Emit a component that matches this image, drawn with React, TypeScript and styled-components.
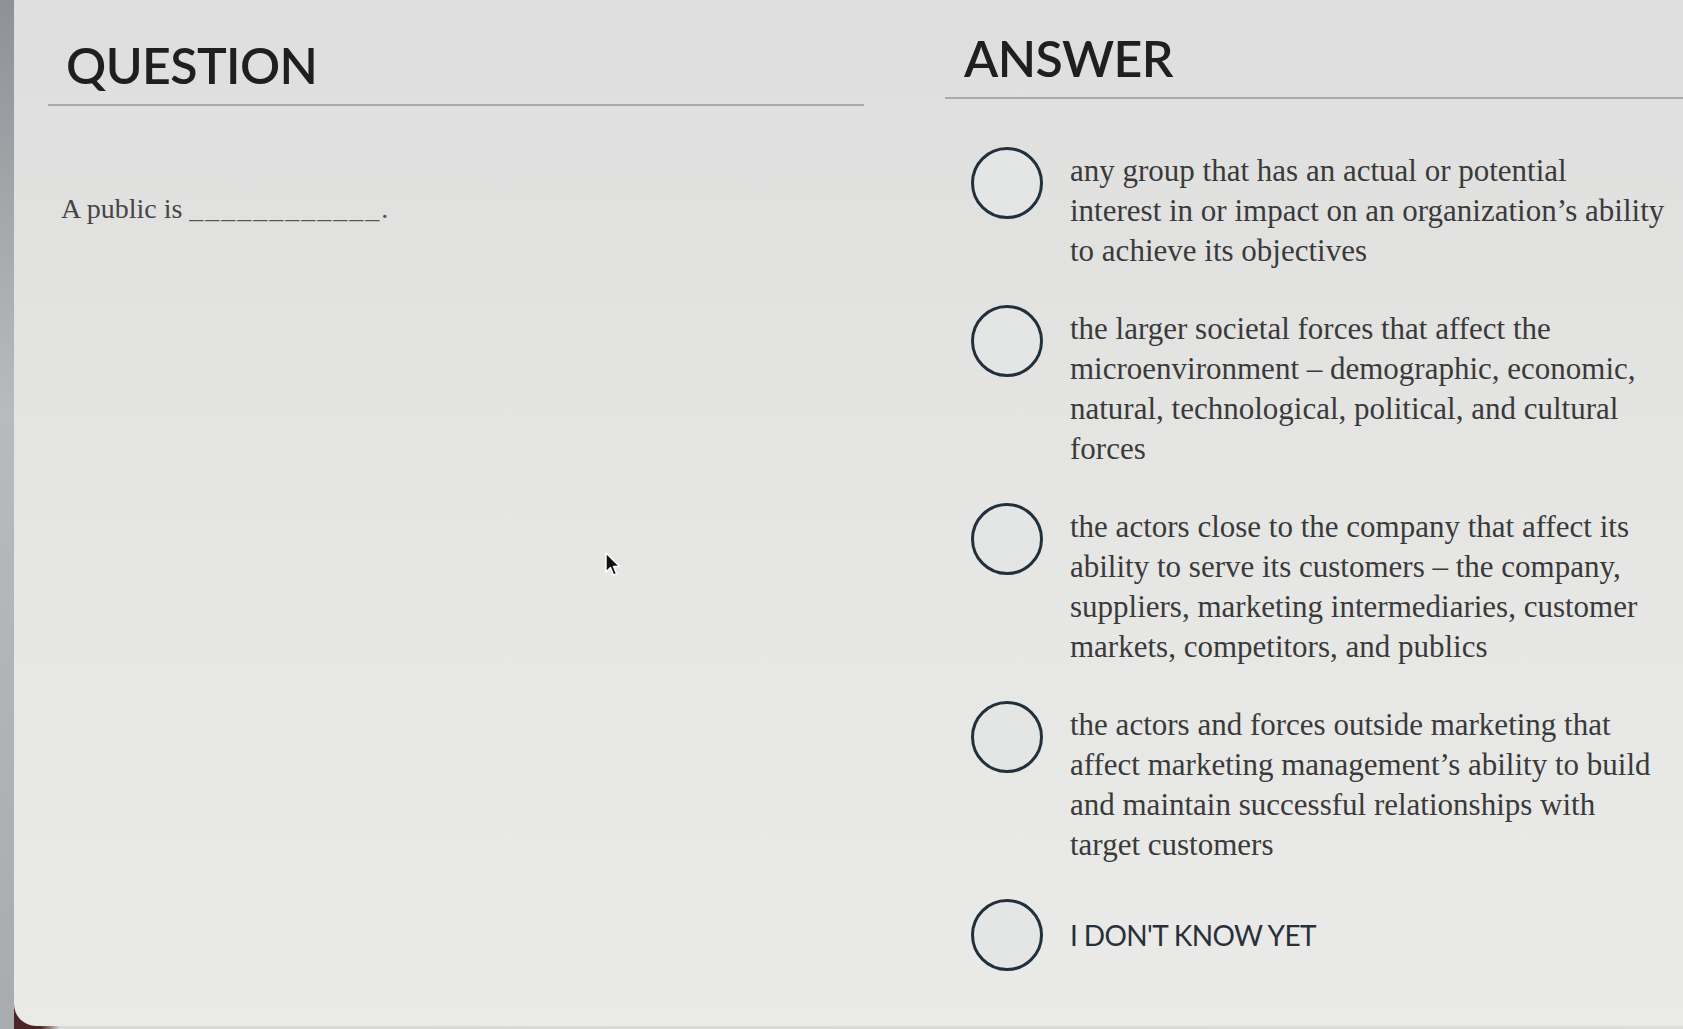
import styled, { createGlobalStyle } from "styled-components";

const GlobalStyle = createGlobalStyle`
  html, body {
    margin: 0;
    padding: 0;
    background: #3a2426;
  }
  * {
    box-sizing: border-box;
  }
`;

const Page = styled.div`
  display: flex;
  width: 1683px;
  height: 1029px;
  overflow: hidden;
  background: linear-gradient(to right, #4a2527 0, #4a2527 40px, #d9d9d7 60px, #dcdcda);
`;

const Bezel = styled.div`
  width: 14px;
  height: 1029px;
  background: linear-gradient(to bottom, #8e9296, #b8bbbe 40%, #a9acaf);
`;

const Screen = styled.main`
  position: relative;
  flex: 1;
  height: 1026px;
  display: grid;
  grid-template-columns: 816px 1fr;
  align-items: start;
  column-gap: 81px;
  padding: 28px 0 0 34px;
  border-bottom-left-radius: 22px;
  background: linear-gradient(to bottom, #dedede, #e6e6e4 55%, #eaeae8);
  overflow: hidden;
`;

const Column = styled.section`
  display: flex;
  flex-direction: column;
`;

const SectionHeader = styled.h2<{ $top: number; $indent: number }>`
  margin: 0;
  padding: ${({ $top }) => $top}px 0 9px ${({ $indent }) => $indent}px;
  border-bottom: 2px solid #a9a9a8;
  font-family: Lato, "Open Sans", sans-serif;
  font-weight: 600;
  font-size: 50px;
  line-height: 60px;
  color: #1f1f1f;
  letter-spacing: -0.6px;
`;

const QuestionText = styled.p`
  margin: 83px 0 0 13px;
  font-family: "Liberation Serif", "DejaVu Serif", serif;
  font-size: 28px;
  line-height: 40px;
  color: #454545;
`;

const Blank = styled.span`
  letter-spacing: 2px;
  color: #555;
`;

const AnswerList = styled.ul`
  list-style: none;
  margin: 48px 0 0;
  padding: 0 0 0 26px;
  display: flex;
  flex-direction: column;
  gap: 34px;
`;

const AnswerRow = styled.li<{ $center?: boolean }>`
  display: flex;
  align-items: ${({ $center }) => ($center ? "center" : "flex-start")};
  gap: 27px;
`;

const Radio = styled.span`
  flex: none;
  width: 72px;
  height: 72px;
  border-radius: 50%;
  border: 3px solid #22303b;
  background: #e4e6e6;
`;

const AnswerText = styled.span<{ $sans?: boolean }>`
  padding-top: ${({ $sans }) => ($sans ? 0 : 4)}px;
  font-family: ${({ $sans }) =>
    $sans ? 'Lato, "Open Sans", sans-serif' : '"Liberation Serif", "DejaVu Serif", serif'};
  font-size: ${({ $sans }) => ($sans ? 28 : 31)}px;
  line-height: 40px;
  letter-spacing: ${({ $sans }) => ($sans ? "-0.6px" : "0")};
  color: ${({ $sans }) => ($sans ? "#28313a" : "#3a3a3a")};
  white-space: nowrap;
`;

const Cursor = styled.svg`
  position: absolute;
  left: 590px;
  top: 552px;
  width: 18px;
  height: 26px;
`;

const answers: string[][] = [
  [
    "any group that has an actual or potential",
    "interest in or impact on an organization\u2019s ability",
    "to achieve its objectives",
  ],
  [
    "the larger societal forces that affect the",
    "microenvironment \u2013 demographic, economic,",
    "natural, technological, political, and cultural",
    "forces",
  ],
  [
    "the actors close to the company that affect its",
    "ability to serve its customers \u2013 the company,",
    "suppliers, marketing intermediaries, customer",
    "markets, competitors, and publics",
  ],
  [
    "the actors and forces outside marketing that",
    "affect marketing management\u2019s ability to build",
    "and maintain successful relationships with",
    "target customers",
  ],
];

export default function App() {
  return (
    <>
      <GlobalStyle />
      <Page>
        <Bezel />
        <Screen>
          <Column>
            <SectionHeader $top={7} $indent={18}>
              QUESTION
            </SectionHeader>
            <QuestionText>
              A public is <Blank>____________.</Blank>
            </QuestionText>
          </Column>
          <Column>
            <SectionHeader $top={0} $indent={19}>
              ANSWER
            </SectionHeader>
            <AnswerList>
              {answers.map((lines, i) => (
                <AnswerRow key={i}>
                  <Radio />
                  <AnswerText>
                    {lines.map((line, j) => (
                      <span key={j}>
                        {line}
                        {j < lines.length - 1 && <br />}
                      </span>
                    ))}
                  </AnswerText>
                </AnswerRow>
              ))}
              <AnswerRow $center>
                <Radio />
                <AnswerText $sans>I DON'T KNOW YET</AnswerText>
              </AnswerRow>
            </AnswerList>
          </Column>
          <Cursor viewBox="0 0 18 26">
            <path
              d="M2 1 L2 20 L6.5 15.5 L9.5 23 L12.5 21.8 L9.5 14.5 L15.5 14.5 Z"
              fill="#111"
              stroke="#fff"
              strokeWidth="1.4"
              strokeLinejoin="round"
            />
          </Cursor>
        </Screen>
      </Page>
    </>
  );
}
